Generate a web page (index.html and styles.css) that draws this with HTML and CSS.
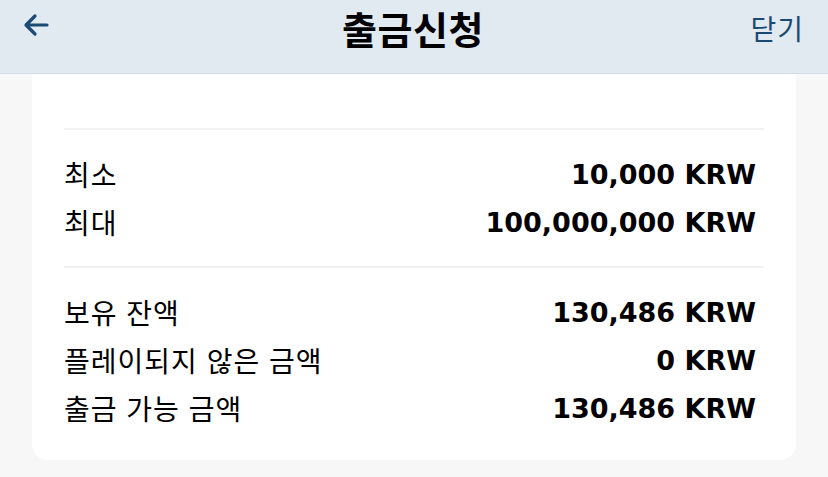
FILE: index.html
```html
<!DOCTYPE html>
<html lang="ko">
<head>
  <meta charset="UTF-8" />
  <title>출금신청</title>
  <link rel="stylesheet" href="styles.css">
</head>
<body>
  <header class="top-bar">
    <div class="bar">
      <button class="back" aria-label="뒤로">
        <svg width="28" height="28" viewBox="0 0 28 28">
          <path d="M25 13H5M13 4L4 13l9 9" fill="none" stroke="#1b4a72" stroke-width="3.2" stroke-linecap="round" stroke-linejoin="round"/>
        </svg>
      </button>
      <h1 class="title">출금신청</h1>
      <button class="close">닫기</button>
    </div>
  </header>

  <div class="card">
    <div class="spacer"></div>

    <div class="divider"></div>
    <div class="section">
      <div class="row"><span class="label">최소</span><span class="value">10,000 KRW</span></div>
      <div class="row"><span class="label">최대</span><span class="value">100,000,000 KRW</span></div>
    </div>

    <div class="divider"></div>
    <div class="section last">
      <div class="row"><span class="label">보유 잔액</span><span class="value">130,486 KRW</span></div>
      <div class="row"><span class="label">플레이되지 않은 금액</span><span class="value">0 KRW</span></div>
      <div class="row"><span class="label">출금 가능 금액</span><span class="value">130,486 KRW</span></div>
    </div>
  </div>
</body>
</html>
```

FILE: styles.css
```css
body {
  margin: 0;
  background: #f7f7f7;
  font-family: "Noto Sans CJK KR", "Noto Sans", sans-serif;
  color: #000;
}

/* Top navigation bar */
.top-bar {
  background: #e1e9f1;
  border-bottom: 1px solid #d6dde4;
  padding: 0 24px 18px 22px;
}

.bar {
  display: grid;
  grid-template-columns: 1fr auto 1fr;
  align-items: center;
}

.back {
  justify-self: start;
  border: 0;
  background: none;
  padding: 0;
  margin-top: -3px;
  display: flex;
}

.title {
  margin: 0;
  font-size: 38px;
  font-weight: 700;
  line-height: normal;
  letter-spacing: 0.5px;
}

.close {
  justify-self: end;
  border: 0;
  background: none;
  padding: 0;
  font-family: "Noto Sans CJK KR", sans-serif;
  font-size: 28px;
  letter-spacing: 1px;
  color: #1b4a72;
  line-height: normal;
}

/* White card */
.card {
  margin: 0 32px;
  background: #fff;
  border-radius: 0 0 16px 16px;
  padding: 0 32px;
}

.spacer {
  height: 54px;
}

.divider {
  height: 2px;
  background: #f1f1f1;
}

.section {
  padding: 20px 0;
}

.section.last {
  padding-bottom: 28px;
}

.row {
  height: 48px;
  display: flex;
  justify-content: space-between;
  align-items: center;
  padding-right: 8px;
}

.label {
  font-size: 28px;
  letter-spacing: 1px;
}

.value {
  font-family: "DejaVu Sans", sans-serif;
  font-weight: bold;
  font-size: 27px;
}
```
